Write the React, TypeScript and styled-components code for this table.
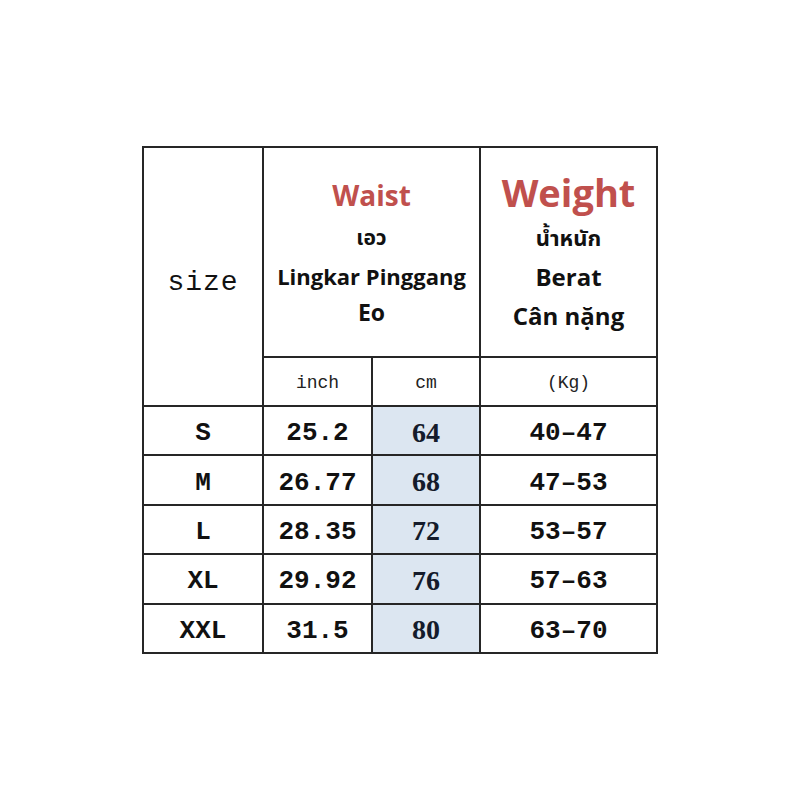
import styled, { createGlobalStyle } from "styled-components";

// rows of the size chart
interface ISizeRow {
    size: string;
    inch: string;
    cm: string;
    kg: string;
}

const rows: ISizeRow[] = [
    { size: "S", inch: "25.2", cm: "64", kg: "40–47" },
    { size: "M", inch: "26.77", cm: "68", kg: "47–53" },
    { size: "L", inch: "28.35", cm: "72", kg: "53–57" },
    { size: "XL", inch: "29.92", cm: "76", kg: "57–63" },
    { size: "XXL", inch: "31.5", cm: "80", kg: "63–70" },
];

const App = () => {
    return (
        <Page>
            <GlobalStyle />
            <Chart>
                <colgroup>
                    <col style={{ width: 120 }} />
                    <col style={{ width: 109 }} />
                    <col style={{ width: 108 }} />
                    <col style={{ width: 177 }} />
                </colgroup>
                <tbody>
                    <HeadRow>
                        <SizeHead rowSpan={2}>size</SizeHead>
                        <Head colSpan={2}>
                            <Stack>
                                <Title $size={28} $lh={42}>Waist</Title>
                                <Line $size={21} $lh={42}>เอว</Line>
                                <Line $size={22} $lh={36}>Lingkar Pinggang</Line>
                                <Line $size={23} $lh={36}>Eo</Line>
                            </Stack>
                        </Head>
                        <Head>
                            <Stack>
                                <Title $size={38} $lh={48}>Weight</Title>
                                <Line $size={22} $lh={42}>น้ำหนัก</Line>
                                <Line $size={24} $lh={38}>Berat</Line>
                                <Line $size={24} $lh={40}>Cân nặng</Line>
                            </Stack>
                        </Head>
                    </HeadRow>
                    <UnitRow>
                        <Unit>inch</Unit>
                        <Unit>cm</Unit>
                        <Unit>(Kg)</Unit>
                    </UnitRow>
                    {rows.map((row) => (
                        <DataRow key={row.size}>
                            <Cell>{row.size}</Cell>
                            <Cell>{row.inch}</Cell>
                            <CmCell>{row.cm}</CmCell>
                            <Cell>{row.kg}</Cell>
                        </DataRow>
                    ))}
                </tbody>
            </Chart>
        </Page>
    );
};

const GlobalStyle = createGlobalStyle`
    body {
        margin: 0;
        background: #ffffff;
    }
`;

const Page = styled.div`
    width: 800px;
    height: 800px;
    display: flex;
    align-items: center;
    justify-content: center;
    background: #ffffff;
`;

const Chart = styled.table`
    border-collapse: collapse;
    table-layout: fixed;
    width: 514px;
    color: #111;
    td {
        border: 2px solid #262626;
        padding: 0;
        text-align: center;
        vertical-align: middle;
    }
`;

const HeadRow = styled.tr`
    height: 210px;
`;

const UnitRow = styled.tr`
    height: 49px;
`;

const DataRow = styled.tr`
    height: 49.4px;
`;

const SizeHead = styled.td`
    font-family: "Liberation Mono", monospace;
    font-size: 28px;
    letter-spacing: 1px;
    && {
        padding-top: 12px;
    }
`;

const Head = styled.td`
    font-family: "Open Sans", "Noto Sans", "Noto Sans Thai", "DejaVu Sans", sans-serif;
`;

const Stack = styled.div`
    display: flex;
    flex-direction: column;
    align-items: center;
`;

const Line = styled.div<{ $size: number; $lh: number }>`
    font-size: ${(p) => p.$size}px;
    line-height: ${(p) => p.$lh}px;
    font-weight: 700;
    color: #111;
    white-space: nowrap;
`;

const Title = styled(Line)`
    color: #c0504d;
`;

const Unit = styled.td`
    font-family: "Liberation Mono", monospace;
    font-size: 18px;
    color: #222;
    && {
        padding-top: 3px;
    }
`;

const Cell = styled.td`
    font-family: "Liberation Mono", monospace;
    font-size: 26px;
    font-weight: 700;
    && {
        padding-top: 5px;
    }
`;

const CmCell = styled.td`
    background: #dce6f1;
    font-family: "Liberation Serif", serif;
    font-size: 28px;
    font-weight: 700;
    color: #141b2b;
    && {
        padding-top: 4px;
    }
`;

export default App;
